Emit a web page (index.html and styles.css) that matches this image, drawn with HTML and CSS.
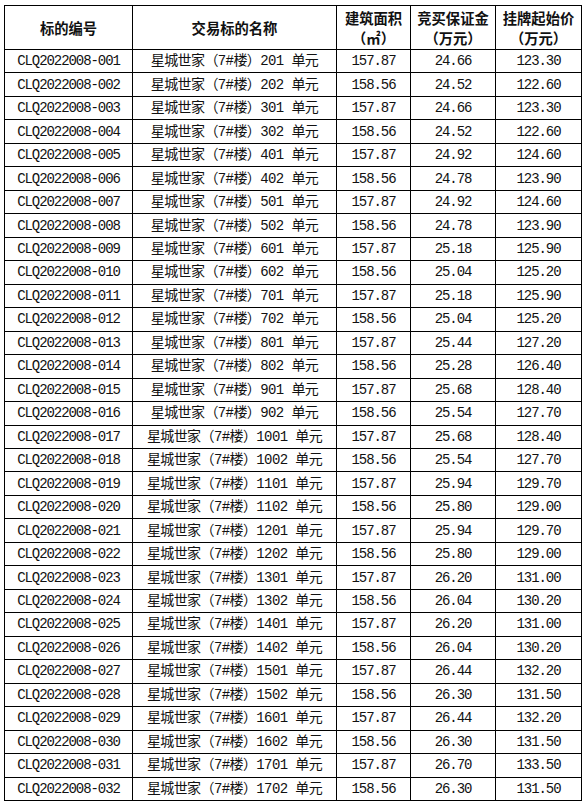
FILE: index.html
```html
<!DOCTYPE html>
<html lang="zh-CN">
<head>
<meta charset="utf-8">
<title>标的列表</title>
<link rel="stylesheet" href="styles.css">
</head>
<body>
<table class="lots">
  <colgroup>
    <col class="c-id"><col class="c-name"><col class="c-area"><col class="c-dep"><col class="c-price">
  </colgroup>
  <thead>
    <tr class="head">
      <th>标的编号</th>
      <th>交易标的名称</th>
      <th>建筑面积<br>（㎡）</th>
      <th>竞买保证金<br>（万元）</th>
      <th>挂牌起始价<br>（万元）</th>
    </tr>
  </thead>
  <tbody>
    <tr><td class="mono">CLQ2022008-001</td><td class="name">星城世家（7#楼）201 单元</td><td class="mono">157.87</td><td class="mono">24.66</td><td class="mono">123.30</td></tr>
    <tr><td class="mono">CLQ2022008-002</td><td class="name">星城世家（7#楼）202 单元</td><td class="mono">158.56</td><td class="mono">24.52</td><td class="mono">122.60</td></tr>
    <tr><td class="mono">CLQ2022008-003</td><td class="name">星城世家（7#楼）301 单元</td><td class="mono">157.87</td><td class="mono">24.66</td><td class="mono">123.30</td></tr>
    <tr><td class="mono">CLQ2022008-004</td><td class="name">星城世家（7#楼）302 单元</td><td class="mono">158.56</td><td class="mono">24.52</td><td class="mono">122.60</td></tr>
    <tr><td class="mono">CLQ2022008-005</td><td class="name">星城世家（7#楼）401 单元</td><td class="mono">157.87</td><td class="mono">24.92</td><td class="mono">124.60</td></tr>
    <tr><td class="mono">CLQ2022008-006</td><td class="name">星城世家（7#楼）402 单元</td><td class="mono">158.56</td><td class="mono">24.78</td><td class="mono">123.90</td></tr>
    <tr><td class="mono">CLQ2022008-007</td><td class="name">星城世家（7#楼）501 单元</td><td class="mono">157.87</td><td class="mono">24.92</td><td class="mono">124.60</td></tr>
    <tr><td class="mono">CLQ2022008-008</td><td class="name">星城世家（7#楼）502 单元</td><td class="mono">158.56</td><td class="mono">24.78</td><td class="mono">123.90</td></tr>
    <tr><td class="mono">CLQ2022008-009</td><td class="name">星城世家（7#楼）601 单元</td><td class="mono">157.87</td><td class="mono">25.18</td><td class="mono">125.90</td></tr>
    <tr><td class="mono">CLQ2022008-010</td><td class="name">星城世家（7#楼）602 单元</td><td class="mono">158.56</td><td class="mono">25.04</td><td class="mono">125.20</td></tr>
    <tr><td class="mono">CLQ2022008-011</td><td class="name">星城世家（7#楼）701 单元</td><td class="mono">157.87</td><td class="mono">25.18</td><td class="mono">125.90</td></tr>
    <tr><td class="mono">CLQ2022008-012</td><td class="name">星城世家（7#楼）702 单元</td><td class="mono">158.56</td><td class="mono">25.04</td><td class="mono">125.20</td></tr>
    <tr><td class="mono">CLQ2022008-013</td><td class="name">星城世家（7#楼）801 单元</td><td class="mono">157.87</td><td class="mono">25.44</td><td class="mono">127.20</td></tr>
    <tr><td class="mono">CLQ2022008-014</td><td class="name">星城世家（7#楼）802 单元</td><td class="mono">158.56</td><td class="mono">25.28</td><td class="mono">126.40</td></tr>
    <tr><td class="mono">CLQ2022008-015</td><td class="name">星城世家（7#楼）901 单元</td><td class="mono">157.87</td><td class="mono">25.68</td><td class="mono">128.40</td></tr>
    <tr><td class="mono">CLQ2022008-016</td><td class="name">星城世家（7#楼）902 单元</td><td class="mono">158.56</td><td class="mono">25.54</td><td class="mono">127.70</td></tr>
    <tr><td class="mono">CLQ2022008-017</td><td class="name">星城世家（7#楼）1001 单元</td><td class="mono">157.87</td><td class="mono">25.68</td><td class="mono">128.40</td></tr>
    <tr><td class="mono">CLQ2022008-018</td><td class="name">星城世家（7#楼）1002 单元</td><td class="mono">158.56</td><td class="mono">25.54</td><td class="mono">127.70</td></tr>
    <tr><td class="mono">CLQ2022008-019</td><td class="name">星城世家（7#楼）1101 单元</td><td class="mono">157.87</td><td class="mono">25.94</td><td class="mono">129.70</td></tr>
    <tr><td class="mono">CLQ2022008-020</td><td class="name">星城世家（7#楼）1102 单元</td><td class="mono">158.56</td><td class="mono">25.80</td><td class="mono">129.00</td></tr>
    <tr><td class="mono">CLQ2022008-021</td><td class="name">星城世家（7#楼）1201 单元</td><td class="mono">157.87</td><td class="mono">25.94</td><td class="mono">129.70</td></tr>
    <tr><td class="mono">CLQ2022008-022</td><td class="name">星城世家（7#楼）1202 单元</td><td class="mono">158.56</td><td class="mono">25.80</td><td class="mono">129.00</td></tr>
    <tr><td class="mono">CLQ2022008-023</td><td class="name">星城世家（7#楼）1301 单元</td><td class="mono">157.87</td><td class="mono">26.20</td><td class="mono">131.00</td></tr>
    <tr><td class="mono">CLQ2022008-024</td><td class="name">星城世家（7#楼）1302 单元</td><td class="mono">158.56</td><td class="mono">26.04</td><td class="mono">130.20</td></tr>
    <tr><td class="mono">CLQ2022008-025</td><td class="name">星城世家（7#楼）1401 单元</td><td class="mono">157.87</td><td class="mono">26.20</td><td class="mono">131.00</td></tr>
    <tr><td class="mono">CLQ2022008-026</td><td class="name">星城世家（7#楼）1402 单元</td><td class="mono">158.56</td><td class="mono">26.04</td><td class="mono">130.20</td></tr>
    <tr><td class="mono">CLQ2022008-027</td><td class="name">星城世家（7#楼）1501 单元</td><td class="mono">157.87</td><td class="mono">26.44</td><td class="mono">132.20</td></tr>
    <tr><td class="mono">CLQ2022008-028</td><td class="name">星城世家（7#楼）1502 单元</td><td class="mono">158.56</td><td class="mono">26.30</td><td class="mono">131.50</td></tr>
    <tr><td class="mono">CLQ2022008-029</td><td class="name">星城世家（7#楼）1601 单元</td><td class="mono">157.87</td><td class="mono">26.44</td><td class="mono">132.20</td></tr>
    <tr><td class="mono">CLQ2022008-030</td><td class="name">星城世家（7#楼）1602 单元</td><td class="mono">158.56</td><td class="mono">26.30</td><td class="mono">131.50</td></tr>
    <tr><td class="mono">CLQ2022008-031</td><td class="name">星城世家（7#楼）1701 单元</td><td class="mono">157.87</td><td class="mono">26.70</td><td class="mono">133.50</td></tr>
    <tr><td class="mono">CLQ2022008-032</td><td class="name">星城世家（7#楼）1702 单元</td><td class="mono">158.56</td><td class="mono">26.30</td><td class="mono">131.50</td></tr>
  </tbody>
</table>
</body>
</html>
```

FILE: styles.css
```css
html, body {
  margin: 0;
  padding: 0;
  background: #ffffff;
}

body {
  padding: 5px 0 0 4px;
  font-family: "Noto Sans CJK SC", sans-serif;
  color: #111111;
}

.lots {
  border-collapse: collapse;
  table-layout: fixed;
  width: 577px;
}

.c-id { width: 128px; }
.c-name { width: 204px; }
.c-area { width: 74px; }
.c-dep { width: 85px; }
.c-price { width: 86px; }

.lots th,
.lots td {
  border: 1px solid #000000;
  padding: 0;
  text-align: center;
  vertical-align: middle;
  white-space: nowrap;
  overflow: hidden;
}

.head {
  height: 44px;
}

.lots th {
  font-family: "Noto Sans CJK SC", sans-serif;
  font-weight: 700;
  font-size: 14.3px;
  line-height: 20px;
}

.lots tbody tr {
  height: 23.47px;
}

.lots td {
  line-height: 20px;
}

.mono {
  font-family: "Liberation Mono", "Noto Sans CJK SC", monospace;
  font-size: 14px;
  letter-spacing: -1.07px;
}

.name {
  font-family: "Liberation Mono", "Noto Sans CJK SC", monospace;
  font-size: 14px;
  letter-spacing: -0.6px;
  font-weight: 400;
}
```
